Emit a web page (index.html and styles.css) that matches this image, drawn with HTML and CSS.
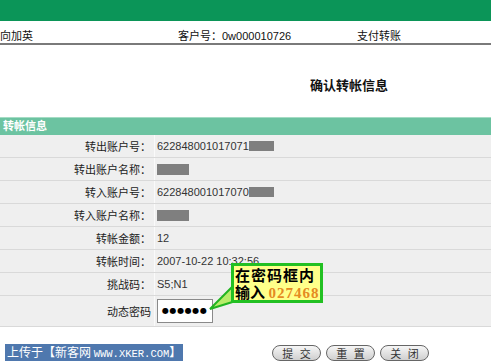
FILE: index.html
```html
<!DOCTYPE html>
<html lang="zh-CN">
<head>
<meta charset="utf-8">
<title>确认转帐信息</title>
<link rel="stylesheet" href="styles.css">
</head>
<body>
<div class="topbar"></div>
<div class="infobar">
  <span>向加英</span>
  <span>客户号：0w000010726</span>
  <span>支付转账</span>
</div>
<div class="title">确认转帐信息</div>
<div class="section">转帐信息</div>
<div class="table">
  <div class="row"><div class="label">转出账户号：</div><div class="value">622848001017071<span class="mask mask-num"></span></div></div>
  <div class="row"><div class="label">转出账户名称：</div><div class="value"><span class="mask mask-name"></span></div></div>
  <div class="row"><div class="label">转入账户号：</div><div class="value">622848001017070<span class="mask mask-num"></span></div></div>
  <div class="row"><div class="label">转入账户名称：</div><div class="value"><span class="mask mask-name"></span></div></div>
  <div class="row"><div class="label">转帐金额：</div><div class="value">12</div></div>
  <div class="row"><div class="label">转帐时间：</div><div class="value">2007-10-22 10:32:56</div></div>
  <div class="row"><div class="label">挑战码：</div><div class="value">S5;N1</div></div>
  <div class="row row-pass"><div class="label">动态密码</div><div class="value"><div class="pwd">●●●●●●</div></div></div>
</div>
<div class="footer">
  <div class="mark">上传于【新客网 <span class="mono">WWW.XKER.COM</span>】</div>
  <div class="buttons">
    <span class="btn">提 交</span>
    <span class="btn">重 置</span>
    <span class="btn">关 闭</span>
  </div>
</div>
<div class="callout">
  <svg class="tail" width="40" height="40" viewBox="0 0 40 40">
    <polygon points="30,20 4,46 36,36" fill="#b8ec6a" stroke="#22b422" stroke-width="2"/>
  </svg>
  <div class="bubble">
    <div class="line1">在密码框内</div>
    <div>输入 <span class="code">027468</span></div>
  </div>
</div>
</body>
</html>
```
FILE: styles.css
```css
html, body {
  margin: 0;
  padding: 0;
  background: #fff;
}
body {
  font-family: "Liberation Sans", "Noto Sans CJK SC", sans-serif;
  font-size: 11px;
  color: #222;
  width: 491px;
  height: 361px;
  overflow: hidden;
}
.topbar {
  height: 21px;
  background: #0b9558;
}
.infobar {
  display: grid;
  grid-template-columns: 178px 179px 1fr;
  padding-top: 8px;
  line-height: 14px;
  height: 14px;
  border-bottom: 2px solid #7a7a7a;
  color: #111;
}
.title {
  padding: 33px 0 23px 310px;
  line-height: 16px;
  font-size: 13px;
  font-weight: bold;
  color: #111;
}
.section {
  height: 17px;
  line-height: 17px;
  border-top: 1px solid #a5dcc4;
  background: #6cc3a1;
  color: #fff;
  font-weight: bold;
  padding-left: 3px;
}
.table {
  background: #efefef;
}
.row {
  display: grid;
  grid-template-columns: 155px 1fr;
  height: 22px;
  border-bottom: 1px solid #d9d9d9;
}
.row-pass {
  height: 30px;
}
.label {
  text-align: right;
  padding-right: 3px;
  border-right: 1px solid #fafafa;
  display: flex;
  align-items: center;
  justify-content: flex-end;
  color: #222;
}
.value {
  display: flex;
  align-items: center;
  padding-left: 2px;
  color: #333;
}
.mask {
  display: inline-block;
  background: #7f7f7f;
  height: 10px;
}
.mask-num {
  width: 25px;
}
.mask-name {
  width: 32px;
  height: 11px;
}
.pwd {
  width: 50px;
  height: 22px;
  background: #fff;
  border: 1px solid #8a8a8a;
  font-family: "DejaVu Sans", sans-serif;
  font-size: 8px;
  line-height: 22px;
  padding-left: 4px;
  letter-spacing: 0.6px;
  color: #000;
  box-sizing: content-box;
}
.footer {
  display: grid;
  grid-template-columns: 272px auto;
  padding-top: 17px;
  align-items: center;
}
.mark {
  justify-self: start;
  margin-left: 5px;
  background: #4f78ae;
  color: #fff;
  font-size: 12px;
  line-height: 15px;
  padding: 0 2px;
  font-family: "Noto Sans CJK SC", sans-serif;
}
.mono {
  font-family: "Liberation Mono", monospace;
  font-size: 10.5px;
}
.buttons {
  display: flex;
  gap: 5px;
}
.btn {
  width: 47px;
  height: 14px;
  line-height: 14px;
  text-align: center;
  border: 1px solid #666;
  border-radius: 8px;
  background: linear-gradient(#f6f6f6, #cfcfcf);
  color: #333;
  font-size: 11px;
  word-spacing: 4px;
  font-family: "Noto Sans CJK SC", sans-serif;
}
.callout {
  position: absolute;
  left: 206px;
  top: 263px;
  width: 116px;
  height: 50px;
}
.tail {
  position: absolute;
  left: 0;
  top: 0;
  overflow: visible;
}
.bubble {
  position: absolute;
  left: 25px;
  top: 0;
  width: 85px;
  height: 34px;
  border: 3px solid #22c022;
  background: #ffff8a;
  font-weight: bold;
  font-size: 15px;
  line-height: 17px;
  color: #000;
  font-family: "Noto Sans CJK SC", sans-serif;
  padding-left: 1px;
}
.line1 {
  letter-spacing: 1px;
}
.code {
  font-family: "Liberation Serif", serif;
  color: #e58a22;
  font-size: 15px;
  letter-spacing: 1px;
}
```
